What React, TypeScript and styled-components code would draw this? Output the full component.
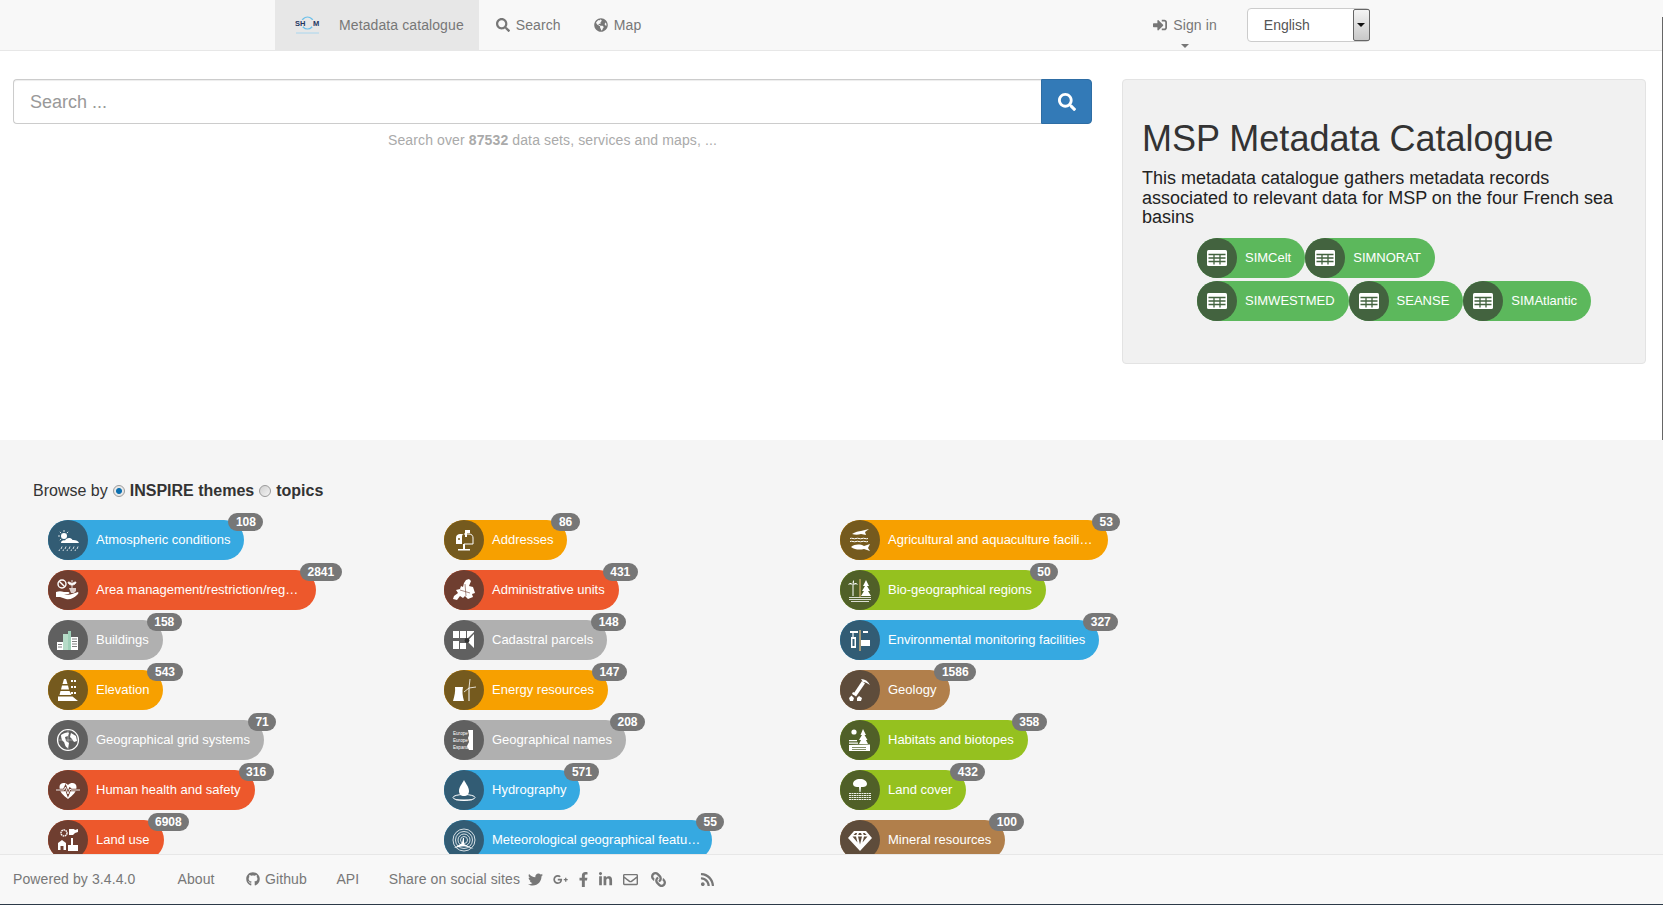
import React from "react";
import styled, { createGlobalStyle } from "styled-components";
import {
  FaFacebookF,
  FaGithub,
  FaGlobeAmericas,
  FaGooglePlusG,
  FaLink,
  FaLinkedinIn,
  FaRegEnvelope,
  FaRss,
  FaSearch,
  FaSignInAlt,
  FaTwitter,
} from "react-icons/fa";

const GlobalStyle = createGlobalStyle`
  html, body {
    margin: 0;
    height: 100%;
    overflow: hidden;
    background: #fff;
    font-family: "Liberation Sans", Arial, sans-serif;
    font-size: 14px;
    color: #333;
  }
`;

const tones = {
  blue: { bar: "#36a9e1", circle: "#325c74" },
  red: { bar: "#ed582c", circle: "#6f3e30" },
  gray: { bar: "#b0b0b0", circle: "#606060" },
  orange: { bar: "#f7a000", circle: "#755a1e" },
  green: { bar: "#95c11f", circle: "#506028" },
  brown: { bar: "#b17f4b", circle: "#5e4c3b" },
  sea: { bar: "#5cb85c", circle: "#43633f" },
};

type Tone = keyof typeof tones;

const Navbar = styled.nav`
  display: flex;
  align-items: stretch;
  height: 50px;
  padding-left: 275px;
  background: #f8f8f8;
  border-bottom: 1px solid #e7e7e7;
  letter-spacing: 0.1px;
`;

const Brand = styled.a`
  display: flex;
  align-items: center;
  gap: 19px;
  padding: 0 15px 0 20px;
  background: #e7e7e7;
  color: #777;
  margin-right: 1px;
`;

const NavLink = styled.a`
  display: flex;
  align-items: center;
  gap: 6px;
  padding: 0 16px;
  margin-right: 1px;
  color: #777;
`;

const SignIn = styled(NavLink)`
  position: relative;
  margin: 0 0 0 495px;
  padding: 0 17px 0 0;
  gap: 6px;

  &::after {
    content: "";
    position: absolute;
    left: 28px;
    top: 44px;
    border: 4px solid transparent;
    border-top-color: #777;
    border-bottom-width: 0;
  }
`;

const LangWrap = styled.div`
  position: relative;
  width: 123px;
  height: 34px;
  margin: 8px 0 0 13px;
`;

const LangSelect = styled.select`
  appearance: none;
  width: 100%;
  height: 100%;
  padding: 0 0 0 16px;
  background: #fff;
  border: 1px solid #ccc;
  border-radius: 4px;
  color: #555;
  font: 14px "Liberation Sans", Arial, sans-serif;
`;

const LangArrow = styled.span`
  position: absolute;
  top: 1px;
  right: 0;
  display: flex;
  align-items: center;
  justify-content: center;
  width: 17px;
  height: 32px;
  box-sizing: border-box;
  border: 1px solid #666;
  border-radius: 2px;
  background: linear-gradient(#f4f4f4, #c8c8c8);

  &::after {
    content: "";
    border: 4px solid transparent;
    border-top-color: #111;
    border-bottom-width: 0;
  }
`;

const Hero = styled.div`
  display: flex;
  height: 389px;
  box-sizing: border-box;
  padding: 28px 17px 0 13px;
`;

const SearchColumn = styled.div`
  width: 1079px;
  margin-right: 30px;
`;

const SearchRow = styled.div`
  display: flex;
  height: 45px;
`;

const SearchInput = styled.input`
  flex: 1;
  min-width: 0;
  box-sizing: border-box;
  padding: 1px 16px 0;
  border: 1px solid #ccc;
  border-right: 0;
  border-radius: 4px 0 0 4px;
  box-shadow: inset 0 1px 1px rgba(0, 0, 0, 0.075);
  font: 18px "Liberation Sans", Arial, sans-serif;
  color: #555;

  &::placeholder {
    color: #999;
    opacity: 1;
  }
`;

const SearchButton = styled.button`
  display: flex;
  align-items: center;
  justify-content: center;
  width: 51px;
  padding: 0;
  border: 1px solid #2e6da4;
  border-radius: 0 4px 4px 0;
  background: #337ab7;
  color: #fff;
  font-size: 18px;
`;

const SearchHint = styled.p`
  margin: 6px 0 0;
  text-align: center;
  color: #aaa;
  line-height: 20px;
  letter-spacing: 0.12px;
`;

const Panel = styled.section`
  flex: 1;
  box-sizing: border-box;
  height: 285px;
  padding: 39px 19px 0;
  background: #f1f1f1;
  border: 1px solid #e3e3e3;
  border-radius: 4px;
`;

const PanelTitle = styled.h1`
  margin: 0 0 10px;
  font-size: 36px;
  font-weight: 500;
  line-height: 40px;
  color: #333;
`;

const PanelText = styled.p`
  margin: 1px 0 10px;
  font-size: 18px;
  line-height: 19.6px;
  color: #222;
`;

const ChipList = styled.div`
  display: flex;
  flex-direction: column;
  gap: 3px;
  padding-left: 55px;
`;

const ChipRow = styled.div`
  display: flex;
`;

const Pill = styled.a<{ $tone: Tone }>`
  position: relative;
  display: inline-flex;
  align-items: center;
  height: 40px;
  border-radius: 20px;
  padding-right: 14px;
  background: ${(p) => tones[p.$tone].bar};
  color: #fff;
  font-size: 13px;
`;

const Disc = styled.span<{ $tone: Tone }>`
  display: flex;
  flex: none;
  align-items: center;
  justify-content: center;
  width: 40px;
  height: 40px;
  margin-right: 8px;
  border-radius: 50%;
  background: ${(p) => tones[p.$tone].circle};
  color: #fff;
`;

// long names arrive already shortened and all take the full label width
const PillLabel = styled.span<{ $long?: boolean }>`
  width: ${(p) => (p.$long ? "206px" : "auto")};
  padding-bottom: 1px;
  white-space: nowrap;
`;

const Badge = styled.span`
  position: absolute;
  top: -7px;
  left: calc(100% - 16px);
  padding: 3px 7.5px;
  border-radius: 10px;
  background: #777;
  color: #fff;
  font-size: 12px;
  font-weight: 700;
  line-height: 1;
`;

const Browse = styled.section`
  height: 470px;
  box-sizing: border-box;
  padding: 40px 0 0 33px;
  background: #f5f5f5;
`;

const BrowseHeading = styled.div`
  display: flex;
  align-items: center;
  gap: 5px;
  font-size: 16px;
  line-height: 22px;
  color: #333;
`;

const Radio = styled.span<{ $on?: boolean }>`
  width: 10px;
  height: 10px;
  border: 1px solid #9a9a9a;
  border-radius: 50%;
  background: ${(p) =>
    p.$on
      ? "radial-gradient(circle, #0b6fb0 0 2.5px, #e8e8e8 3.5px)"
      : "linear-gradient(135deg, #d0d0d0, #f4f4f4)"};
`;

const ThemeGrid = styled.div`
  display: grid;
  grid-template-columns: repeat(3, 396px);
  grid-auto-rows: 40px;
  row-gap: 10px;
  justify-items: start;
  margin: 18px 0 0 15px;
`;

const Footer = styled.footer`
  position: fixed;
  left: 0;
  right: 0;
  bottom: 1px;
  display: flex;
  align-items: center;
  gap: 29.5px;
  height: 48px;
  padding: 0 0 1px 13px;
  background: #f8f8f8;
  border-top: 1px solid #e7e7e7;
  color: #777;
  letter-spacing: 0.1px;
`;

const Powered = styled.span`
  margin-right: 12.5px;
`;

const FooterLink = styled.a`
  display: flex;
  align-items: center;
  gap: 5px;
`;

const AboutLink = styled(FooterLink)`
  margin-right: 2px;
`;

const SocialList = styled.div`
  display: flex;
  align-items: center;
  gap: 10px;
  margin-left: -22px;
  font-size: 15px;
`;

const PlusGlyph = styled(FaGooglePlusG)`
  margin-right: -2px;
`;

const FacebookGlyph = styled(FaFacebookF)`
  margin-right: -3px;
`;

const MailGlyph = styled(FaRegEnvelope)`
  margin-right: 3px;
`;

const LinkGlyph = styled(FaLink)`
  transform: scaleX(-1);
`;

const RssGlyph = styled(FaRss)`
  margin-left: 24px;
`;

const ScreenBottom = styled.div`
  position: fixed;
  left: 0;
  right: 0;
  bottom: 0;
  height: 1px;
  background: #2c3a48;
`;

const ScreenEdge = styled.div`
  position: fixed;
  top: 17px;
  right: 0;
  width: 1px;
  height: 423px;
  background: #666;
`;

const Ink = styled.svg`
  display: block;
  width: 24px;
  height: 24px;
  fill: #fff;
  stroke: none;
`;

const Logo = () => (
  <svg width="25" height="20" viewBox="0 0 25 20">
    <circle cx="12.5" cy="8" r="6" fill="none" stroke="#6cc0ea" strokeWidth="1.2" />
    <rect x="0" y="5" width="8" height="7" fill="#e7e7e7" />
    <rect x="17" y="5" width="8" height="7" fill="#e7e7e7" />
    <text x="0" y="11" fontSize="7.5" fontWeight="700" fill="#24365f" fontFamily="Liberation Sans">
      SH
    </text>
    <text x="18" y="11" fontSize="7.5" fontWeight="700" fill="#24365f" fontFamily="Liberation Sans">
      M
    </text>
    <line x1="1" y1="18" x2="24" y2="18" stroke="#a9d6ee" strokeWidth="1" />
  </svg>
);

const TableGlyph = () => (
  <svg width="20" height="16" viewBox="0 0 20 16">
    <rect width="20" height="16" rx="1.5" fill="#fff" />
    <path d="M1.500 4.500h17M1.500 8h17M1.500 11.500h17M7 4.500v10M13 4.500v10" stroke="#43633f" strokeWidth="1.300" />
  </svg>
);

const Atmosphere = () => (
  <Ink viewBox="0 0 24 24">
    <circle cx="8" cy="8" r="3" />
    <path d="M8 2v2M2 8h2M3.800 3.800l1.400 1.400M3.800 12.200l1.400-1.400M12.200 3.800l-1.400 1.400" stroke="#fff" strokeWidth="0.800" />
    <path d="M5 15c0-2 2-3 4-2.500C10 9.500 15 9 16.500 12c2-.5 6 .5 6.500 3z" />
    <path d="M5 21l1-2.500M9 21l1-2.500M13 21l1-2.500M17 21l1-2.500M21 21l1-2.500M3 23l.6-1.500M7 23l.6-1.500M11 23l.6-1.500M15 23l.6-1.500M19 23l.6-1.500" stroke="#fff" strokeWidth="0.800" />
  </Ink>
);

const AreaManagement = () => (
  <Ink viewBox="0 0 24 24">
    <circle cx="6" cy="6" r="4" fill="none" stroke="#fff" strokeWidth="1.400" />
    <path d="M3.200 3.200l5.600 5.600" stroke="#fff" strokeWidth="1.400" />
    <path d="M16 2v8M16 6c-2-2-3-2-4-2 0 2 2 3 4 3zM16 6c2-2 3-2 4-2 0 2-2 3-4 3z" stroke="#fff" strokeWidth="0.800" />
    <path d="M13 10h7v3l-2 2h-3z" opacity="0.75" />
    <path d="M0 14c3-1 5-1 8 0h4c2 0 2 2 0 2H8c3 1 6 1 8 0l6-2c1 1 0 2-1 3-3 3-7 5-11 4l-6-2H0z" />
  </Ink>
);

const Buildings = () => (
  <Ink viewBox="0 0 24 24">
    <path d="M1 14h6v8H1z" />
    <path d="M7 6h5v16H7z" fill="#b7dcc8" />
    <path d="M12 3h3v19h-3z" fill="#9fd0b8" />
    <path d="M15 9h7v13h-7z" />
    <path d="M16 11h5M16 13.500h5M16 16h5M16 18.500h5M2 16.500h4M2 19h4" stroke="#606060" strokeWidth="0.800" />
  </Ink>
);

const Elevation = () => (
  <Ink viewBox="0 0 24 24">
    <path d="M8 1h2l1.500 5H6.500zM6 7.500h6l1 4H5zM4.500 13h9l2 4h-12zM2 18.500h14.500L22 23H2z" />
    <path d="M15 3h6M15 9h6M15 15h6" stroke="#fff" strokeWidth="1.800" strokeDasharray="2 1" />
  </Ink>
);

const GridGlobe = () => (
  <Ink viewBox="0 0 24 24">
    <circle cx="12" cy="12" r="10.500" fill="none" stroke="#fff" strokeWidth="1.200" />
    <path d="M5 7c3-2 6-3 8-2l-1 3-3 1 1 4 3 2-1 5c-3-1-3-4-4-6-2-1-3-4-3-7zM15 5l5 3 1 5-3 1-2-3-2-2z" />
    <path d="M1.500 12h21M12 1.500v21" stroke="#fff" strokeWidth="0.400" />
  </Ink>
);

const Health = () => (
  <Ink viewBox="0 0 24 24">
    <path d="M12 21C7 17 3.500 14 3.500 9 3.500 5 8.500 3.500 12 7c3.500-3.500 8.500-2 8.500 2 0 5-3.500 8-8.500 12z" />
    <path d="M0 12h8l1.500-3 2.500 7 2-5 1 1h9" fill="none" stroke="#6f3e30" strokeWidth="2.600" />
    <path d="M0 12h8l1.500-3 2.500 7 2-5 1 1h9" fill="none" stroke="#fff" strokeWidth="0.900" />
  </Ink>
);

const LandUse = () => (
  <Ink viewBox="0 0 24 24">
    <circle cx="8" cy="5" r="3" fill="none" stroke="#fff" strokeWidth="1.400" strokeDasharray="1.600 0.600" />
    <path d="M13 1h5l1 1 3-1v3l-3 1-2 2h-4z" />
    <path d="M2 15l4-3 4 3v7H2z" />
    <path d="M4.500 18h3v4h-3z" fill="#6f3e30" />
    <path d="M15 10h2v7h5v6H12v-6h3z" />
  </Ink>
);

const Addresses = () => (
  <Ink viewBox="0 0 24 24">
    <path d="M4 10c0-3 2-4 4-4h4c-2 0-2 2-2 4v6H4z" />
    <path d="M12 6h5c3 0 4 2 4 4v6h-9" fill="none" stroke="#fff" strokeWidth="1" />
    <path d="M13 2h5v3h-3v4h-2zM11 16h2v5h5v1.500H6V21h5z" />
    <circle cx="7" cy="11" r="1" fill="#755a1e" />
  </Ink>
);

const Admin = () => (
  <Ink viewBox="0 0 24 24">
    <path d="M14 2l3-1 2 2-2 5 4 1 2 6-3 1 1 3-5 2-3-3-2 2-3-2-3 4-4-1 1-3 4-3-2-3 4-1 1-3 2 1 1-4z" />
    <path d="M13 6l1 12M8 12l10 3" stroke="#6f3e30" strokeWidth="0.600" />
  </Ink>
);

const Cadastral = () => (
  <Ink viewBox="0 0 24 24">
    <path d="M1 3h6v7H1zM8 3h6v7H8zM1 13h6v8H1zM8 15h6v6H8zM15 3h7v1l-7 7zM22 6v14l-6-6-.5-1z" />
    <circle cx="15" cy="12.500" r="2.400" fill="#333" />
  </Ink>
);

const Energy = () => (
  <Ink viewBox="0 0 24 24">
    <path d="M3 9h8c-1 4-.5 9 1 14H1c1.500-5 2.500-10 2-14z" />
    <path d="M17 10v13" stroke="#fff" strokeWidth="1" />
    <path d="M17 10l1-9M17 10l7-1M17 10l-5 4" stroke="#fff" strokeWidth="0.800" />
  </Ink>
);

const GeoNames = () => (
  <Ink viewBox="0 0 24 24">
    <g fontSize="4.600" fontFamily="Liberation Sans">
      <text x="1" y="7">Europe</text>
      <text x="1" y="14">Europe</text>
      <text x="1" y="21">Espana</text>
    </g>
    <path d="M16 2h5v20h-4l-2-4 2-4-1-4 1-3z" />
  </Ink>
);

const Hydro = () => (
  <Ink viewBox="0 0 24 24">
    <path d="M12 2c2 4 5 7 5 11 0 3-2 5-5 5s-5-2-5-5c0-4 3-7 5-11z" />
    <ellipse cx="12" cy="19.500" rx="11" ry="3" fill="none" stroke="#fff" strokeWidth="1" />
    <path d="M4 21h16v1.500H4z" opacity="0.5" />
  </Ink>
);

const Meteo = () => (
  <Ink viewBox="0 0 24 24">
    <g fill="none" stroke="#fff" strokeWidth="0.800">
      <circle cx="12" cy="12" r="11" />
      <circle cx="12" cy="12" r="8.500" />
      <circle cx="12" cy="12" r="6" />
      <circle cx="12" cy="12" r="3.500" />
    </g>
    <path d="M2 20l8-5 1-5h1v6l10 5-10-3z" />
  </Ink>
);

const Agriculture = () => (
  <Ink viewBox="0 0 24 24">
    <path d="M4 6c3-2 7-3 9-3l8-2-4 3 1 3-5-1c-3 1-6 1-9 0z" />
    <path d="M2 10.500c2-1 4 1 6 0s4 1 6 0 4 1 6 0M2 13.500c2-1 4 1 6 0s4 1 6 0 4 1 6 0" fill="none" stroke="#fff" strokeWidth="1" />
    <path d="M3 19c4-3 9-3 13-1l6-2-2 4 2 3-6-2c-4 1-9 1-13-2z" />
  </Ink>
);

const BioRegion = () => (
  <Ink viewBox="0 0 24 24">
    <path d="M5 7v11" stroke="#fff" strokeWidth="1" />
    <path d="M5 7C3 4 1 5 0 7c1-1 3-1 5 0zM5 7c2-3 4-2 5 0-1-1-3-1-5 0zM5 7C4 4 5 3 6 2c0 2 0 3-1 5z" />
    <path d="M12 1v18" stroke="#f2c27a" strokeWidth="1" />
    <path d="M18 2l3 6h-2l3 5h-2l3 5h-10l3-5h-2l3-5h-2z" />
    <path d="M1 19.500h22M1 21.500h22M3 23.500h18" stroke="#fff" strokeWidth="0.800" />
  </Ink>
);

const Monitoring = () => (
  <Ink viewBox="0 0 24 24">
    <path d="M12 2v21" stroke="#f2c27a" strokeWidth="1.200" />
    <path d="M2 3h8v2H2zM15 3h5v2h-5zM13 12h9v6h-9zM3 9h5v11H3z" />
    <path d="M5 5v4" stroke="#fff" strokeWidth="1.200" />
    <path d="M4.500 11h2v7h-2z" fill="#325c74" />
  </Ink>
);

const Geology = () => (
  <Ink viewBox="0 0 24 24">
    <path d="M13 1c4 0 7 2 9 6-3-2-5-3-7-3z" />
    <path d="M14 3l3 2.500-9 13-3-2z" />
    <path d="M1 20l2.500-2.500L6 20l-1 3H2zM9 20l2-2 3 2-1 3H9zM4 15l2-1 1 2-2 1z" />
  </Ink>
);

const Habitats = () => (
  <Ink viewBox="0 0 24 24">
    <circle cx="6" cy="4" r="2.600" />
    <path d="M15 1l3 6h-1.500l3 5h-1.500l2 4h-9l2-4H11l3-5h-1.500z" />
    <path d="M1 12h8v1.200H1zM1 14.500h9v1.200H1zM1 17l21-.5V23H1z" />
    <path d="M4 19.500h14M4 21.500h14" stroke="#506028" strokeWidth="0.700" />
  </Ink>
);

const LandCover = () => (
  <Ink viewBox="0 0 24 24">
    <path d="M12 1c4 0 7 2 7 5 0 2-2 3-4 3h-2l-.5 5h-1L11 9H9C7 9 5 8 5 6c0-3 3-5 7-5z" />
    <path d="M1 15.500h22M1 17.500h22M1 19.500h22M1 21.500h22" stroke="#fff" strokeWidth="0.900" strokeDasharray="2 0.500" />
  </Ink>
);

const Mineral = () => (
  <Ink viewBox="0 0 24 24">
    <path fillRule="evenodd" d="M6 3h12l6 7-12 13L0 10zM8 8.500H4.500l5 6zM10 8.500l2 8 2-8zM16 8.500l-1.500 6 5-6zM7.500 5l-2 2h2.800l.8-2zM11 5l-.8 2h3.600L13 5zM15 5l.8 2h2.800l-2-2z" />
  </Ink>
);

const themes: { label: string; count: number; tone: Tone; Icon: React.FC }[] = [
  { label: "Atmospheric conditions", count: 108, tone: "blue", Icon: Atmosphere },
  { label: "Addresses", count: 86, tone: "orange", Icon: Addresses },
  { label: "Agricultural and aquaculture facili…", count: 53, tone: "orange", Icon: Agriculture },
  { label: "Area management/restriction/reg…", count: 2841, tone: "red", Icon: AreaManagement },
  { label: "Administrative units", count: 431, tone: "red", Icon: Admin },
  { label: "Bio-geographical regions", count: 50, tone: "green", Icon: BioRegion },
  { label: "Buildings", count: 158, tone: "gray", Icon: Buildings },
  { label: "Cadastral parcels", count: 148, tone: "gray", Icon: Cadastral },
  { label: "Environmental monitoring facilities", count: 327, tone: "blue", Icon: Monitoring },
  { label: "Elevation", count: 543, tone: "orange", Icon: Elevation },
  { label: "Energy resources", count: 147, tone: "orange", Icon: Energy },
  { label: "Geology", count: 1586, tone: "brown", Icon: Geology },
  { label: "Geographical grid systems", count: 71, tone: "gray", Icon: GridGlobe },
  { label: "Geographical names", count: 208, tone: "gray", Icon: GeoNames },
  { label: "Habitats and biotopes", count: 358, tone: "green", Icon: Habitats },
  { label: "Human health and safety", count: 316, tone: "red", Icon: Health },
  { label: "Hydrography", count: 571, tone: "blue", Icon: Hydro },
  { label: "Land cover", count: 432, tone: "green", Icon: LandCover },
  { label: "Land use", count: 6908, tone: "red", Icon: LandUse },
  { label: "Meteorological geographical featu…", count: 55, tone: "blue", Icon: Meteo },
  { label: "Mineral resources", count: 100, tone: "brown", Icon: Mineral },
];

const basinRows = [
  ["SIMCelt", "SIMNORAT"],
  ["SIMWESTMED", "SEANSE", "SIMAtlantic"],
];

export default function App() {
  return (
    <>
      <GlobalStyle />
      <Navbar>
        <Brand>
          <Logo />
          Metadata catalogue
        </Brand>
        <NavLink>
          <FaSearch />
          Search
        </NavLink>
        <NavLink>
          <FaGlobeAmericas />
          Map
        </NavLink>
        <SignIn>
          <FaSignInAlt />
          Sign in
        </SignIn>
        <LangWrap>
          <LangSelect defaultValue="en">
            <option value="en">English</option>
          </LangSelect>
          <LangArrow />
        </LangWrap>
      </Navbar>

      <Hero>
        <SearchColumn>
          <SearchRow>
            <SearchInput placeholder="Search ..." />
            <SearchButton>
              <FaSearch />
            </SearchButton>
          </SearchRow>
          <SearchHint>
            Search over <b>87532</b> data sets, services and maps, ...
          </SearchHint>
        </SearchColumn>
        <Panel>
          <PanelTitle>MSP Metadata Catalogue</PanelTitle>
          <PanelText>
            This metadata catalogue gathers metadata records associated to relevant data for MSP on
            the four French sea basins
          </PanelText>
          <ChipList>
            {basinRows.map((row) => (
              <ChipRow key={row[0]}>
                {row.map((name) => (
                  <Pill key={name} $tone="sea">
                    <Disc $tone="sea">
                      <TableGlyph />
                    </Disc>
                    {name}
                  </Pill>
                ))}
              </ChipRow>
            ))}
          </ChipList>
        </Panel>
      </Hero>

      <Browse>
        <BrowseHeading>
          Browse by
          <Radio $on />
          <b>INSPIRE themes</b>
          <Radio />
          <b>topics</b>
        </BrowseHeading>
        <ThemeGrid>
          {themes.map(({ label, count, tone, Icon }) => (
            <Pill key={label} $tone={tone}>
              <Disc $tone={tone}>
                <Icon />
              </Disc>
              <PillLabel $long={label.endsWith("…")}>{label}</PillLabel>
              <Badge>{count}</Badge>
            </Pill>
          ))}
        </ThemeGrid>
      </Browse>

      <Footer>
        <Powered>Powered by 3.4.4.0</Powered>
        <AboutLink>About</AboutLink>
        <FooterLink>
          <FaGithub />
          Github
        </FooterLink>
        <FooterLink>API</FooterLink>
        <FooterLink>Share on social sites</FooterLink>
        <SocialList>
          <FaTwitter />
          <PlusGlyph />
          <FacebookGlyph />
          <FaLinkedinIn />
          <MailGlyph />
          <LinkGlyph />
          <RssGlyph />
        </SocialList>
      </Footer>
      <ScreenEdge />
      <ScreenBottom />
    </>
  );
}
